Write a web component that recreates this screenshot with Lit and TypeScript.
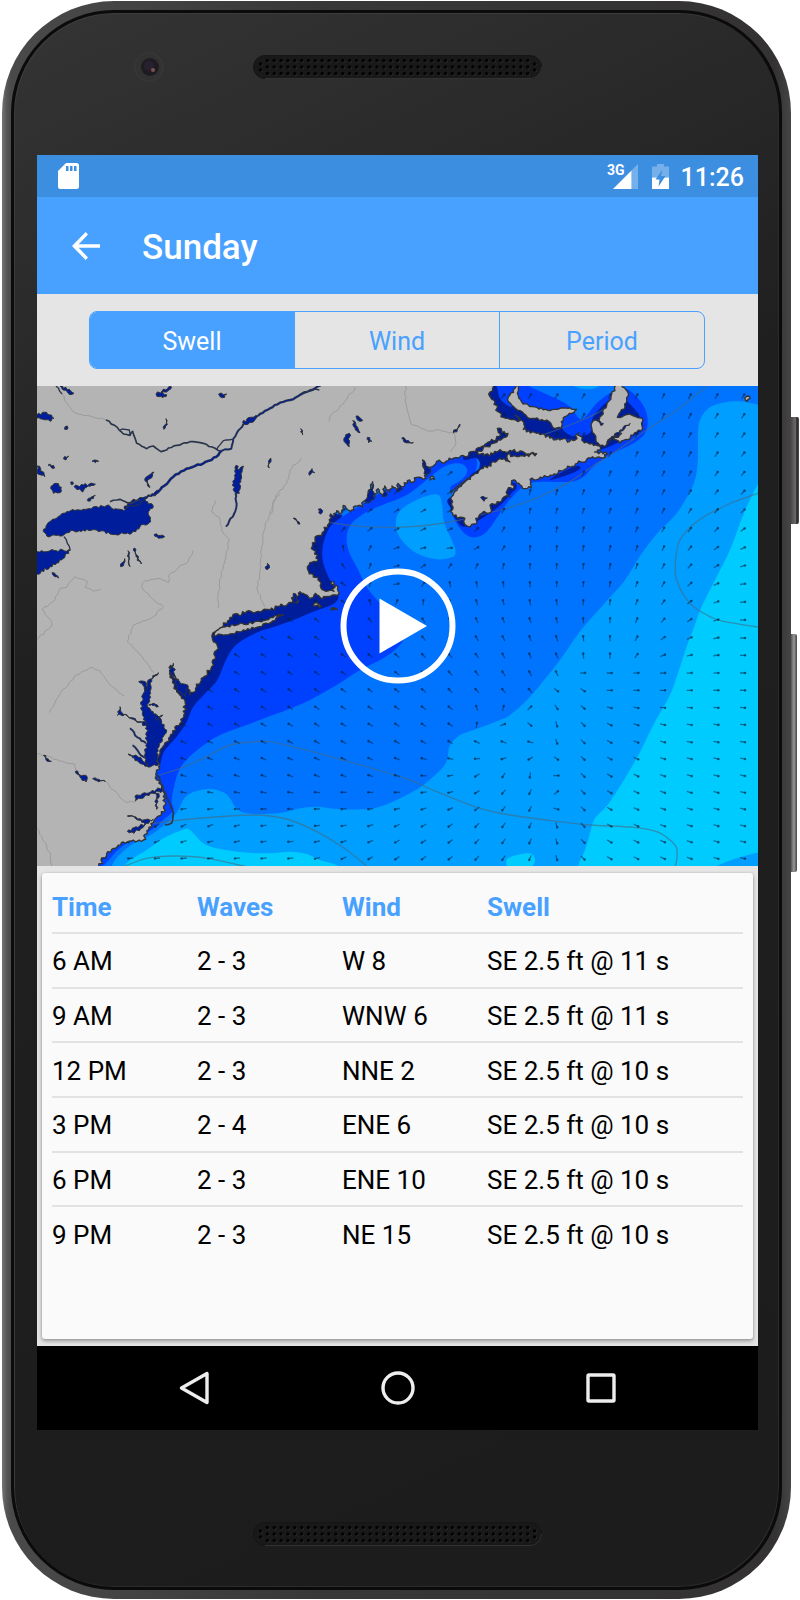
import { LitElement, html, svg, css } from "lit";
import { customElement, state } from "lit/decorators.js";

type Pt = [number, number];

/* ---------- geometry helpers ---------- */

/** Turns "x,y x,y ..." into a list of points. */
const pts = (s: string): Pt[] =>
  s.trim().split(/\s+/).map((p) => p.split(",").map(Number) as Pt);

/** Smooth Catmull-Rom curve through the points. */
function smooth(s: string, closed = false): string {
  const p = pts(s);
  const n = p.length;
  const at = (i: number): Pt =>
    closed ? p[(i + n) % n] : p[Math.max(0, Math.min(n - 1, i))];
  let d = `M${p[0][0]} ${p[0][1]}`;
  for (let i = 0; i < (closed ? n : n - 1); i++) {
    const [a, b, c, e] = [at(i - 1), at(i), at(i + 1), at(i + 2)];
    d += `C${(b[0] + (c[0] - a[0]) / 6).toFixed(1)} ${(b[1] + (c[1] - a[1]) / 6).toFixed(1)} ${(c[0] - (e[0] - b[0]) / 6).toFixed(1)} ${(c[1] - (e[1] - b[1]) / 6).toFixed(1)} ${c[0]} ${c[1]}`;
  }
  return closed ? d + "Z" : d;
}

/** Ragged shoreline: splits each edge into short steps and nudges them sideways. */
function rough(s: string, amp = 5, closed = true, step = 9): string {
  const p = pts(s);
  let seed = 7 + p.length * 131 + Math.round(p[0][0]);
  const rnd = () => {
    seed = (seed * 16807) % 2147483647;
    return seed / 2147483647 - 0.5;
  };
  const out: Pt[] = [];
  for (let i = 0; i < (closed ? p.length : p.length - 1); i++) {
    const a = p[i];
    const b = p[(i + 1) % p.length];
    const len = Math.hypot(b[0] - a[0], b[1] - a[1]) || 1;
    const n = Math.max(1, Math.round(len / step));
    for (let k = 0; k < n; k++) {
      const t = k / n;
      const o = k === 0 ? 0 : rnd() * 2 * amp;
      out.push([
        a[0] + (b[0] - a[0]) * t - ((b[1] - a[1]) / len) * o,
        a[1] + (b[1] - a[1]) * t + ((b[0] - a[0]) / len) * o,
      ]);
    }
  }
  if (!closed) out.push(p[p.length - 1]);
  return (
    "M" + out.map((q) => `${q[0].toFixed(1)} ${q[1].toFixed(1)}`).join("L") + (closed ? "Z" : "")
  );
}

/* ---------- chart data (three units to the pixel) ---------- */

const BAND_3 = [
  "2250,90 2184,74 2130,64 2080,68 2035,85 2008,125 2004,180 2004,225 2000,275 1985,325 1940,400 1880,462 1832,525 1785,600 1740,652 1655,748 1590,840 1500,950 1440,1005 1410,1020 1340,1047 1290,1065 1260,1095 1253,1130 1240,1160 1180,1215 1120,1250 1050,1280 990,1288 920,1287 860,1280 810,1285 770,1295 720,1301 650,1300 618,1283 600,1255 580,1237 540,1227 490,1236 463,1255 445,1290 420,1320 370,1360 290,1405 245,1458 240,1520 2250,1520",
  "1105,400 1140,370 1190,348 1226,345 1236,375 1242,425 1265,480 1277,515 1265,532 1220,538 1160,520 1115,480 1098,440",
  "1610,0 1640,22 1675,28 1705,20 1730,0",
];

const BAND_4 = [
  "2250,200 2184,312 2155,370 2130,430 2100,510 2060,590 2015,680 1990,748 1970,800 1945,875 1920,945 1870,1035 1820,1135 1740,1265 1695,1315 1680,1360 1665,1410 1645,1458 1640,1520 2250,1520",
  "260,1520 285,1455 350,1410 400,1375 450,1352 475,1347 495,1365 520,1390 560,1405 640,1417 720,1420 780,1415 830,1422 870,1440 930,1462 950,1520",
  "1430,1440 1450,1428 1480,1421 1505,1422 1515,1440 1505,1460 1470,1475 1435,1465",
];

const BAND_3_TOP = "2020,1475 2060,1458 2120,1435 2190,1416 2260,1410 2260,1520 2020,1520";

const BAND_1 = [
  "1240,250 1310,210 1350,235 1330,300 1280,340 1262,370 1270,410 1290,445 1310,465 1335,472 1370,455 1410,400 1440,358 1480,320 1520,306 1620,305 1660,290 1690,260 1740,225 1810,190 1845,160 1853,120 1842,80 1812,42 1780,25 1740,40 1700,70 1655,118 1620,80 1570,52 1500,20 1380,-40 1300,100 1240,180",
  "1210,240 1260,215 1330,225 1340,262 1318,300 1270,332 1262,320 1298,296 1312,272 1300,254 1275,250 1235,264 1190,300 1130,345 1070,370 1010,396 965,430 950,470 957,515 982,565 1010,620 1046,665 1095,710 1125,755 1110,795 1060,835 990,870 920,915 840,960 770,990 720,1008 650,1035 560,1070 490,1120 450,1165 432,1220 425,1265 430,1290 400,1320 350,1360 275,1400 218,1458 150,1500 200,1200 340,1000 540,700 800,500",
];

const BAND_0 = [
  "935,405 900,440 880,490 878,540 895,590 925,645 910,672 850,695 790,720 740,738 680,758 618,795 588,840 562,900 530,935 490,980 468,1030 440,1070 402,1115 388,1155 360,1160 340,1000 500,700 760,560 830,420",
  "1300,230 1340,235 1350,262 1320,296 1400,330 1520,240 1540,180 1380,100",
  "1380,20 1400,20 1410,55 1440,80 1480,75 1540,110 1590,125 1600,150 1630,168 1680,158 1690,110 1740,60 1785,60 1830,110 1835,150 1780,180 1700,210 1640,180 1400,160 1370,60",
  "1560,300 1590,280 1640,258 1650,266 1620,282",
  "1265,350 1262,385 1275,415 1300,440 1340,425 1400,385 1440,345 1460,320 1430,310",
];

const MAINLAND_NORTH =
  "0,0 1395,0 1388,25 1376,42 1395,66 1404,95 1420,112 1470,122 1455,105 1477,122 1480,148 1530,164 1590,180 1630,182 1646,158 1655,180 1680,192 1712,204 1694,216 1732,222 1725,232 1670,238 1610,266 1550,290 1500,298 1504,324 1486,326 1470,314 1445,302 1452,322 1432,330 1440,350 1420,352 1400,372 1380,376 1384,396 1362,394 1345,414 1332,432 1312,438 1298,412 1284,414 1268,400 1265,370 1270,345 1300,310 1322,290 1360,265 1410,236 1440,246 1432,224 1460,230 1520,221 1440,211 1400,216 1362,228 1342,216 1372,200 1412,180 1434,160 1402,145 1408,170 1370,190 1330,214 1310,230 1270,235 1240,250 1220,244 1200,262 1186,258 1178,240 1180,262 1190,282 1180,298 1160,292 1150,306 1132,302 1120,320 1104,310 1100,330 1086,318 1080,336 1064,318 1056,344 1044,326 1036,350 1026,334 1028,305 1016,330 1014,356 1000,364 996,382 975,378 962,396 948,384 940,376 936,398 920,392 914,408 902,402 900,425 880,455 868,466 855,480 848,495 850,510 864,538 832,560 836,574 850,584 864,600 872,622 888,634 912,634 906,604 924,620 922,646 870,652 856,640 845,654 820,640 805,640 800,668 795,644 784,668 720,690 650,694 600,712 570,745 546,765 548,780 562,798 556,830 545,860 520,892 500,920 480,945 474,920 450,910 426,880 422,856 420,892 440,935 465,962 465,1000 450,1030 420,1070 396,1104 386,1130 386,1160 380,1200 395,1220 400,1250 405,1290 372,1322 352,1360 340,1380 280,1386 230,1420 206,1458 200,1510 0,1510";

const ISLANDS = [
  "552,768 566,748 592,738 640,732 700,722 735,706 760,704 722,728 680,742 640,750 600,762",
  "1435,65 1440,45 1455,25 1460,5 1466,10 1462,40 1475,66 1500,80 1560,92 1600,84 1640,88 1626,100 1605,110 1594,125 1594,145 1568,142 1550,120 1500,116 1470,92",
  "1765,5 1795,40 1785,80 1762,112 1790,104 1836,114 1838,145 1810,165 1770,190 1750,178 1775,160 1740,176 1724,200 1705,190 1686,150 1688,124 1708,118 1730,76",
  "903,690 912,684 922,688",
  "850,678 860,668 875,680",
  "1200,300 1208,288 1214,298",
  "2144,54 2152,48 2160,56 2152,64",
];

const LAKES = [
  "40,455 60,425 110,395 160,388 235,375 245,385 282,392 304,365 345,358 370,380 355,395 362,425 330,440 305,460 240,462 200,450 130,452 90,468 50,468",
  "10,515 60,512 122,510 95,540 60,560 10,588",
  "21,105 50,97 72,115 60,124 21,114",
  "90,18 118,28 132,40 120,44 100,30",
  "378,42 396,34 410,44 398,54 388,50",
  "396,34 424,20 410,36",
  "566,42 580,44 590,42 584,52 570,50",
  "638,128 660,112 684,108 676,118 648,134",
  "62,325 78,310 94,322 90,338 70,340",
  "21,258 32,266 44,290 30,284 21,276",
  "618,256 628,270 640,258 632,300 628,340 616,345 610,310",
  "282,385 306,362 350,350 396,325 380,342 352,354 330,372",
  "385,878 352,905 335,950 335,990 350,1040 350,1080 346,1120 350,1158 384,1156 380,1118 400,1070 410,1050 386,1010 352,980 362,940 360,908",
  "345,1036 290,1004 262,1006 270,980 276,998 310,1018 352,1030",
  "352,1158 322,1142 294,1122 326,1132 352,1150",
  "350,930 326,905 346,905",
  "356,975 385,980 372,970",
  "375,1010 398,1005 384,1022",
  "398,1232 350,1245 316,1262 318,1245 350,1240 396,1222",
  "376,1240 380,1288 386,1240",
  "370,1318 340,1320 292,1308 330,1316 345,1332 292,1354 312,1360 350,1330",
  "946,170 958,160 958,200 942,184",
  "968,122 982,140 990,158 976,150",
  "978,108 998,122 990,124",
  "1115,174 1136,182 1150,188 1128,188",
  "1270,158 1290,132 1280,156",
  "812,146 818,164 812,156",
  "1012,172 1026,184 1016,188",
  "838,286 846,266 854,278 846,276",
  "790,414 810,432 804,432",
  "864,388 878,392 872,402",
  "1352,352 1372,354 1362,364",
  "344,300 372,276 352,306 360,322",
  "372,464 404,470 392,474",
  "402,148 408,116 412,134",
  "122,306 130,312 124,314",
  "132,320 160,315 196,312 164,324 158,336",
  "172,362 196,346 182,362",
  "100,236 116,228 108,240",
  "104,148 112,138 112,148",
  "186,244 206,244 196,248",
  "54,256 70,256 74,264",
  "294,512 300,560 296,540",
  "312,504 334,552 318,530",
  "272,560 284,536 282,550",
  "718,264 722,234 716,248",
  "708,568 712,550 718,564",
  "66,578 86,594 74,590",
  "136,1174 172,1192 168,1206 150,1192",
  "188,1196 226,1204 200,1202",
  "40,1126 64,1144 52,1144",
  "430,850 418,870 450,912 474,916 466,950 440,930",
  "1030,312 1012,350 1004,372 1030,360",
  "1176,240 1202,268 1190,290",
  "1060,326 1056,350 1072,345",
  "1110,315 1100,332 1118,328",
  "1700,122 1720,130 1712,136",
  "1730,190 1770,150 1800,130 1770,160",
  "790,640 800,650 802,672 792,668",
];

const CHANNELS: { d: string; w: number }[] = [
  { d: "390,330 430,290 470,266 520,250 560,230 576,212", w: 7 },
  { d: "576,212 604,206 610,176 640,132", w: 5 },
  { d: "560,210 580,182 608,178", w: 3 },
  { d: "684,108 720,85 750,68 780,60 805,48 830,36 872,16", w: 6 },
  { d: "815,40 850,28 868,30", w: 3 },
  { d: "228,120 262,142 280,162 300,166 308,154 320,190 350,206 370,198 393,215 440,196 480,185 520,190 572,214", w: 4 },
  { d: "270,150 285,148 298,150 300,166", w: 3 },
  { d: "616,340 620,372 612,402 588,440", w: 5 },
  { d: "240,365 270,358 300,370 330,360", w: 4 },
  { d: "102,470 112,490 120,508", w: 3 },
  { d: "78,18 96,42", w: 3 },
  { d: "384,1188 400,1225 416,1265 430,1300 426,1328 405,1335", w: 4 },
  { d: "300,1045 322,1072 348,1090", w: 5 },
  { d: "308,1096 328,1120 346,1134", w: 5 },
  { d: "1262,340 1280,320 1310,300 1320,294", w: 4 },
];

const RIVERS = [
  "96,42 112,72 138,100 180,108 230,120",
  "555,362 545,395 570,415 580,460 598,480 585,540 568,600 564,684",
  "750,340 738,350 725,400 705,430 695,500 690,570 682,630 705,680",
  "36,690 66,730 58,745 21,778",
  "36,690 75,660 90,625 110,622 134,590 172,604 166,622 190,634 212,628",
  "488,512 475,545 420,580 415,608 390,595 345,602 335,620 360,650 400,680 370,710 310,735 292,785 330,825 372,878",
  "60,998 88,945 140,885 186,862 210,872 240,915 284,948",
  "21,1122 80,1138 134,1152 140,1174",
  "226,1204 250,1230 285,1265 318,1265",
  "21,1345 38,1380 62,1420 66,1458",
  "975,22 940,72 900,108 896,124",
  "1126,18 1128,70 1142,130 1190,152 1230,150 1272,160 1278,190 1262,215",
  "814,234 780,270 770,310 738,345 720,404",
];

const ISOLINES = [
  "900,428 1000,440 1100,442 1200,435 1290,420 1370,400 1440,382 1530,350 1620,305 1700,250 1770,205 1850,150 1940,90 2030,18",
  "1530,168 1620,135 1700,100 1740,75",
  "2190,338 2090,375 2000,425 1950,480 1937,540 1940,600 1980,670 2040,710 2080,724 2190,742",
  "386,1186 450,1165 520,1135 600,1095 680,1085 720,1085 820,1108 920,1135 1120,1193 1220,1235 1340,1282 1440,1305 1590,1325 1680,1335 1810,1342 1880,1355 1920,1380 1940,1405 1940,1440 1935,1460",
  "340,1335 450,1320 600,1308 680,1305 720,1308 780,1320 870,1360 950,1410 1012,1460",
  "285,1458 350,1435 430,1428 520,1433 650,1460",
];

/* Direction field: head angle in degrees, counter-clockwise from east. */
const FIELD_X = [380, 780, 940, 1100, 1260, 1500, 1580, 1660, 1740, 1900, 2140];
const FIELD: [number, number[]][] = [
  [48, [45, 45, 45, 45, 45, 58, 58, 58, 62, 66, 58]],
  [300, [45, 45, 45, 40, 40, 75, 72, 70, 68, 66, 50]],
  [448, [70, 60, 50, 28, 25, 82, 80, 76, 72, 62, 38]],
  [504, [130, 120, 100, 22, 5, 84, 84, 82, 76, 66, 25]],
  [612, [145, 145, 145, 10, 100, 95, 90, 88, 80, 60, 8]],
  [720, [150, 148, 135, 128, 118, 108, 105, 96, 88, 50, 2]],
  [826, [150, 145, 145, 138, 130, 112, 112, 95, 90, 22, 0]],
  [879, [150, 145, 145, 142, 132, 120, 115, 2, 0, 4, 0]],
  [931, [150, 145, 145, 142, 135, 130, -38, -34, 0, 0, -2]],
  [1034, [150, 148, 148, 148, 145, -40, -75, -45, -28, -12, -6]],
  [1086, [158, 150, 150, 150, 148, 165, -72, -45, -30, -14, -8]],
  [1187, [165, 160, 160, 165, 190, 262, 0, -45, -32, -20, -12]],
  [1237, [170, 172, 178, 182, 195, 245, 40, -45, -32, -20, -14]],
  [1337, [215, 183, 190, 205, 215, 245, -72, -45, -32, -20, -14]],
  [1435, [185, 188, 205, 215, 220, 245, -72, -45, -32, -24, -14]],
];
const ROWS = [
  48, 107, 165, 222, 280, 336, 392, 448, 504, 558, 612, 666, 720, 774, 826, 879, 931, 983, 1034,
  1086, 1136, 1187, 1237, 1287, 1337, 1385, 1435,
];

function angleAt(x: number, y: number): number {
  const across = (row: number[]) => {
    let i = 0;
    while (i < FIELD_X.length - 2 && FIELD_X[i + 1] < x) i++;
    const t = Math.max(0, Math.min(1, (x - FIELD_X[i]) / (FIELD_X[i + 1] - FIELD_X[i])));
    return row[i] + (row[i + 1] - row[i]) * t;
  };
  let j = 0;
  while (j < FIELD.length - 2 && FIELD[j + 1][0] < y) j++;
  const t = (y - FIELD[j][0]) / (FIELD[j + 1][0] - FIELD[j][0]);
  return across(FIELD[j][1]) * (1 - t) + across(FIELD[j + 1][1]) * t;
}

function arrows() {
  let shafts = "";
  let heads = "";
  for (const y of ROWS) {
    for (let k = 0; k < 27; k++) {
      const x = 60 + k * 80;
      const a = (angleAt(x, y) * Math.PI) / 180;
      const [dx, dy] = [Math.cos(a), -Math.sin(a)];
      shafts += `M${(x - dx * 10).toFixed(1)} ${(y - dy * 10).toFixed(1)}L${(x + dx * 8).toFixed(1)} ${(y + dy * 8).toFixed(1)}`;
      heads += `M${(x + dx * 5).toFixed(1)} ${(y + dy * 5).toFixed(1)}h.1`;
    }
  }
  return svg`
    <path class="shaft" d=${shafts} />
    <path class="head" d=${heads} />`;
}

@customElement("swell-map")
export class SwellMap extends LitElement {
  static styles = css`
    :host { display: grid; }
    .chart, .play { grid-area: 1 / 1; }
    .chart { display: block; width: 100%; height: auto; }
    .band-0 { fill: #001e9b; }
    .band-1 { fill: #0040ff; }
    .band-2 { fill: #0073ff; }
    .band-3 { fill: #009eff; }
    .band-4 { fill: #00cbff; }
    .land { fill: #b4b4b4; stroke: #333; stroke-width: 4; stroke-linejoin: round; }
    .lake { fill: #001e9b; stroke: #2e3338; stroke-width: 3; }
    .channel { fill: none; stroke: #333a44; stroke-linejoin: round; }
    .channel-water { fill: none; stroke: #001e9b; }
    .river { fill: none; stroke: #9b9b9b; stroke-width: 3; }
    .isoline { fill: none; stroke: #46697f; stroke-opacity: 0.6; stroke-width: 4; }
    .shaft { fill: none; stroke: #002a50; stroke-opacity: 0.55; stroke-width: 4; }
    .head { fill: none; stroke: #002038; stroke-opacity: 0.5; stroke-width: 8; stroke-linecap: round; }
    .play {
      place-self: center; z-index: 1; width: 116px; height: 116px; padding: 0;
      border: 0; border-radius: 50%; background: none; cursor: pointer;
    }
    .play svg { display: block; }
  `;

  render() {
    return html`
      <svg class="chart" viewBox="21 18 2163 1440" role="img" aria-label="Swell height map">
        <rect class="band-2" x="0" y="0" width="2200" height="1500" />
        ${BAND_3.map((s) => svg`<path class="band-3" d=${smooth(s, true)} />`)}
        ${BAND_4.map((s) => svg`<path class="band-4" d=${smooth(s, true)} />`)}
        <path class="band-3" d=${smooth(BAND_3_TOP, true)} />
        ${BAND_1.map((s) => svg`<path class="band-1" d=${smooth(s, true)} />`)}
        ${BAND_0.map((s) => svg`<path class="band-0" d=${smooth(s, true)} />`)}
        ${ISOLINES.map((s) => svg`<path class="isoline" d=${smooth(s)} />`)}
        ${arrows()}
        <path class="land" d=${rough(MAINLAND_NORTH, 6, true, 6)} />
        ${ISLANDS.map((s) => svg`<path class="land" d=${rough(s, 4, true, 7)} />`)}
        ${RIVERS.map((s) => svg`<path class="river" d=${rough(s, 3, false)} />`)}
        ${LAKES.map((s) => svg`<path class="lake" d=${rough(s, 4, true, 6)} />`)}
        ${CHANNELS.map((c) => svg`
          <path class="channel" stroke-width=${c.w + 1} d=${rough(c.d, 2, false)} />
          <path class="channel-water" stroke-width=${c.w > 4 ? c.w - 3 : 0.6} d=${rough(c.d, 2, false)} />`)}
      </svg>
      <button class="play" aria-label="Play animation">
        <svg viewBox="-58 -58 116 116" width="116" height="116">
          <circle r="54.5" fill="none" stroke="#fff" stroke-width="6" />
          <path d="M-18.5 -27.5L29 0L-18.5 27.5Z" fill="#fff" />
        </svg>
      </button>
    `;
  }
}

@customElement("speaker-grille")
export class SpeakerGrille extends LitElement {
  static styles = css`
    :host { display: block; width: 289px; height: 24px; }
    svg { display: block; }
  `;

  render() {
    const holes: Pt[] = [];
    for (let i = 0; i < 41; i++) {
      const x = 7.5 + i * 6.85;
      if (i === 0 || i === 40) holes.push([x, 9], [x, 15]);
      else holes.push([x, 5.5], [x, 12], [x, 18.5]);
    }
    return html`
      <svg width="289" height="24" viewBox="0 0 289 24" aria-hidden="true">
        <rect x=".5" y=".5" width="288" height="23" rx="11.5" fill="#191919" stroke="#151515" />
        <path d="M12 23.5H277a11.5 11.5 0 0 0 11.5 -11.5" fill="none" stroke="#3a3a3a" stroke-width=".8" />
        ${holes.map(([x, y]) => svg`
          <circle cx=${x + 0.7} cy=${y + 0.7} r="1.5" fill="#303030" />
          <circle cx=${x} cy=${y} r="1.7" fill="#030303" />`)}
      </svg>
    `;
  }
}

const TABS = ["Swell", "Wind", "Period"];
const COLUMNS = ["Time", "Waves", "Wind", "Swell"];
const FORECAST = [
  ["6 AM", "2 - 3", "W 8", "SE 2.5 ft @ 11 s"],
  ["9 AM", "2 - 3", "WNW 6", "SE 2.5 ft @ 11 s"],
  ["12 PM", "2 - 3", "NNE 2", "SE 2.5 ft @ 10 s"],
  ["3 PM", "2 - 4", "ENE 6", "SE 2.5 ft @ 10 s"],
  ["6 PM", "2 - 3", "ENE 10", "SE 2.5 ft @ 10 s"],
  ["9 PM", "2 - 3", "NE 15", "SE 2.5 ft @ 10 s"],
];

@customElement("app-root")
export class AppRoot extends LitElement {
  @state() private tab = "Swell";

  static styles = css`
    :host { display: block; background: #fff; font-family: Roboto, "Liberation Sans", sans-serif; }
    * { box-sizing: border-box; }
    button { font: inherit; border: 0; margin: 0; padding: 0; background: none; cursor: pointer; }
    svg { display: block; }

    .device { display: flex; align-items: stretch; padding: 1px 1px 1px 2px; }
    .phone {
      flex: 1; min-width: 0; padding: 9px; border-radius: 112px;
      background: linear-gradient(90deg, #757575 0, #555 5px, #4a4a4a 9px, #383838 40%, #343233 98%, #454545 100%);
    }
    .face {
      border: 3px solid #0b0b0b; border-radius: 103px; padding: 0 21px 0 23px;
      background: linear-gradient(155deg, #343434 0%, #2c2c2c 14%, #1f1f1f 36%, #1c1c1d 100%);
      box-shadow: inset 1px 1px 0 #3c3c3c, inset -1px -1px 0 #2b2b2b;
    }
    .keys { flex: none; width: 8px; display: flex; flex-direction: column; gap: 110px; padding-top: 416px; }
    .key { border-radius: 0 2px 2px 0; background: linear-gradient(90deg, #4a4748, #6e6a6b 55%, #222 75%, #555); }
    .power { height: 107px; }
    .volume { width: 6px; height: 238px; background: linear-gradient(90deg, #555, #999 50%, #444); }

    .bezel { display: grid; grid-template-columns: 1fr auto 1fr; align-items: center; }
    .bezel-top { height: 142px; padding-bottom: 34px; }
    .bezel-bottom { height: 157px; padding-top: 51px; }
    .grille { grid-column: 2; }
    .camera { margin-left: 97px; }

    .status {
      display: flex; align-items: center; height: 42px; padding: 0 14px 0 21px;
      background: #3c8ee1; color: #fff;
    }
    .radio { margin-left: auto; display: flex; align-items: flex-start; }
    .network { font-size: 14px; line-height: 12px; font-weight: 700; margin-right: -12px; }
    .battery { margin: 0 12px 0 14px; }
    .clock { padding-top: 3px; font-size: 25px; line-height: 30px; font-weight: 500; }

    .appbar {
      display: flex; align-items: center; gap: 42px; height: 97px; padding: 0 35px;
      background: #48a1ff; color: #fff;
    }
    .title { margin: 0; padding-top: 4px; font-size: 35px; line-height: 42px; font-weight: 500; }

    .tabs { padding: 17px 53px 17px 52px; background: #e5e5e5; }
    .segments {
      display: flex; height: 58px; border: 1px solid #48a1ff; border-radius: 8px; overflow: hidden;
    }
    .segment { flex: 1; padding-top: 4px; font-size: 25px; line-height: 30px; color: #48a1ff; }
    .segment + .segment { border-left: 1px solid #48a1ff; }
    .segment[aria-pressed="true"] { background: #48a1ff; color: #fff; }

    .sheet { padding: 7px 5px; background: #e5e5e5; }
    .card {
      min-height: 466px; padding: 6px 10px; border-radius: 3px; background: #fafafa;
      box-shadow: 0 2px 4px rgba(0, 0, 0, 0.35), 0 0 2px rgba(0, 0, 0, 0.12);
    }
    .forecast {
      width: 100%; height: 382px; table-layout: fixed; border-collapse: collapse;
      font-size: 26px; line-height: 30px; color: #000;
    }
    .forecast th, .forecast td {
      height: 54px; padding: 2px 0 0; text-align: left; font-weight: 400; white-space: nowrap;
    }
    .forecast thead th { width: 145px; color: #48a1ff; font-weight: 700; }
    .forecast thead th:last-child { width: auto; }
    .forecast tbody tr { border-top: 2px solid #e2e2e2; }

    .nav {
      display: flex; justify-content: center; align-items: center; gap: 155px; height: 84px; background: #000;
    }
    .nav button { width: 48px; height: 48px; display: grid; place-items: center; }
  `;

  render() {
    return html`
      <div class="device">
        <div class="phone">
          <div class="face">
            <div class="bezel bezel-top">
              <svg class="camera" width="30" height="30" viewBox="0 0 30 30" aria-hidden="true">
                <circle cx="15" cy="15" r="15" fill="#363636" />
                <circle cx="15" cy="15" r="13" fill="#323232" />
                <circle cx="16" cy="15" r="9" fill="#1f1c21" />
                <circle cx="15" cy="14" r="5" fill="#262030" />
                <circle cx="19" cy="18" r="2" fill="#7d5250" />
              </svg>
              <speaker-grille class="grille"></speaker-grille>
            </div>

            <main class="screen">
              <div class="status">
                <svg width="21" height="26" viewBox="0 0 21 26" aria-label="SD card" role="img">
                  <path d="M8 0H18.5A2.5 2.5 0 0 1 21 2.5V23.5A2.5 2.5 0 0 1 18.5 26H2.5A2.5 2.5 0 0 1 0 23.5V8Z" fill="#fff" />
                  <path d="M8 3h2.5v5H8zM12 3h2.5v5H12zM16 3h2.5v5H16z" fill="#3c8ee1" />
                </svg>
                <div class="radio">
                  <span class="network">3G</span>
                  <svg width="25" height="25" viewBox="0 0 25 25" aria-label="Signal" role="img">
                    <path d="M25 0V25H18.5V6.5Z" fill="#fff" opacity=".3" />
                    <path d="M18.5 6.5V25H0Z" fill="#fff" />
                  </svg>
                </div>
                <svg class="battery" width="17" height="25" viewBox="0 0 17 25" aria-label="Battery charging" role="img">
                  <path d="M5 0h7v2.5h5V13.5H0V2.5H5Z" fill="#fff" opacity=".3" />
                  <path d="M0 13.5H17V25H0Z" fill="#fff" />
                  <path d="M10.500 5.500L3.500 15.500H7.500L6.500 22.500L13.500 12H9Z" fill="#3c8ee1" />
                </svg>
                <span class="clock">11:26</span>
              </div>

              <header class="appbar">
                <button aria-label="Back">
                  <svg width="28" height="28" viewBox="0 0 28 28">
                    <path d="M28 12.3V15.7H6.7L16 25.5L13.7 28L0 14L13.7 0L16 2.5L6.7 12.3Z" fill="#fff" />
                  </svg>
                </button>
                <h1 class="title">Sunday</h1>
              </header>

              <div class="tabs">
                <div class="segments" role="group" aria-label="Map layer">
                  ${TABS.map((t) => html`
                    <button class="segment" aria-pressed=${this.tab === t ? "true" : "false"}
                      @click=${() => (this.tab = t)}>${t}</button>`)}
                </div>
              </div>

              <swell-map></swell-map>

              <div class="sheet">
                <div class="card">
                  <table class="forecast">
                    <thead>
                      <tr>${COLUMNS.map((c) => html`<th scope="col">${c}</th>`)}</tr>
                    </thead>
                    <tbody>
                      ${FORECAST.map(([time, ...rest]) => html`
                        <tr><th scope="row">${time}</th>${rest.map((v) => html`<td>${v}</td>`)}</tr>`)}
                    </tbody>
                  </table>
                </div>
              </div>

              <nav class="nav">
                <button aria-label="Back">
                  <svg width="34" height="34" viewBox="0 0 34 34">
                    <path d="M29 2.5V31.5L3.5 17Z" fill="none" stroke="#eee" stroke-width="3.4" stroke-linejoin="round" />
                  </svg>
                </button>
                <button aria-label="Home">
                  <svg width="34" height="34" viewBox="0 0 34 34">
                    <circle cx="17" cy="17" r="15" fill="none" stroke="#eee" stroke-width="3.4" />
                  </svg>
                </button>
                <button aria-label="Recent apps">
                  <svg width="34" height="34" viewBox="0 0 34 34">
                    <rect x="4" y="4" width="26" height="26" rx="1" fill="none" stroke="#eee" stroke-width="3.4" />
                  </svg>
                </button>
              </nav>
            </main>

            <div class="bezel bezel-bottom">
              <speaker-grille class="grille"></speaker-grille>
            </div>
          </div>
        </div>
        <div class="keys">
          <div class="key power"></div>
          <div class="key volume"></div>
        </div>
      </div>
    `;
  }
}
